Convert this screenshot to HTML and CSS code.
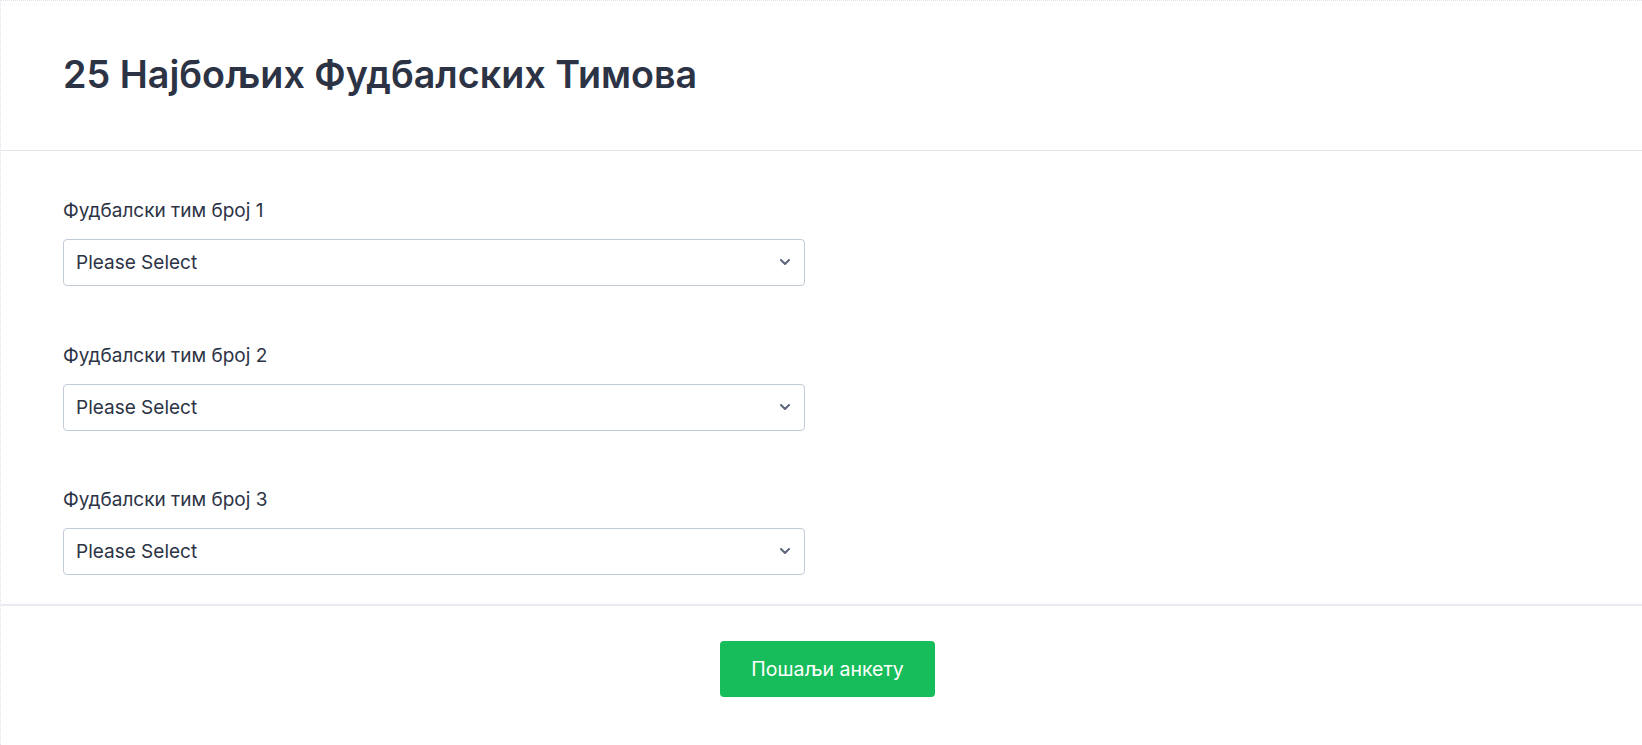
FILE: index.html
```html
<!DOCTYPE html>
<html lang="sr">
<head>
    <meta charset="UTF-8">
    <meta name="viewport" content="width=device-width, initial-scale=1.0">
    <title>25 Најбољих Фудбалских Тимова</title>
    <link rel="stylesheet" href="styles.css">
</head>
<body>
    <form class="form">
        <div class="form-header">
            <h1>25 Најбољих Фудбалских Тимова</h1>
        </div>

        <div class="form-body">
            <div class="form-group">
                <label for="team1">Фудбалски тим број 1</label>
                <div class="select-wrap">
                    <select id="team1">
                        <option>Please Select</option>
                    </select>
                    <svg class="chevron" width="10" height="6" viewBox="0 0 10 6"><path d="M1 1l4 4 4-4" fill="none" stroke="#5f667d" stroke-width="2" stroke-linecap="round" stroke-linejoin="round"/></svg>
                </div>
            </div>

            <div class="form-group">
                <label for="team2">Фудбалски тим број 2</label>
                <div class="select-wrap">
                    <select id="team2">
                        <option>Please Select</option>
                    </select>
                    <svg class="chevron" width="10" height="6" viewBox="0 0 10 6"><path d="M1 1l4 4 4-4" fill="none" stroke="#5f667d" stroke-width="2" stroke-linecap="round" stroke-linejoin="round"/></svg>
                </div>
            </div>

            <div class="form-group">
                <label for="team3">Фудбалски тим број 3</label>
                <div class="select-wrap">
                    <select id="team3">
                        <option>Please Select</option>
                    </select>
                    <svg class="chevron" width="10" height="6" viewBox="0 0 10 6"><path d="M1 1l4 4 4-4" fill="none" stroke="#5f667d" stroke-width="2" stroke-linecap="round" stroke-linejoin="round"/></svg>
                </div>
            </div>
        </div>

        <div class="form-footer">
            <button type="button" class="submit-btn">Пошаљи анкету</button>
        </div>
    </form>
</body>
</html>
```

FILE: styles.css
```css
body {
    margin: 0;
    font-family: 'Inter', 'Noto Sans', sans-serif;
    background-color: #fff;
    color: #2c3345;
}
.form {
    min-height: 100vh;
    box-sizing: border-box;
    border-top: 1px dotted #dfe1ea;
    border-left: 1px dotted #dfe1ea;
}
.form-header {
    padding: 51px 62px 54px;
    border-bottom: 1px solid #e3e5ec;
}
h1 {
    margin: 0;
    font-size: 37.7px;
    line-height: 44px;
    font-weight: 600;
    color: #2c3345;
}
.form-body {
    padding: 48px 62px 29px;
    border-bottom: 2px solid #eaebf2;
}
.form-group {
    margin-bottom: 57.5px;
}
.form-group:last-child {
    margin-bottom: 0;
}
label {
    display: block;
    font-size: 19px;
    line-height: 24px;
    font-weight: 400;
    margin-bottom: 16px;
    color: #2c3345;
}
.select-wrap {
    position: relative;
    width: 742px;
}
select {
    display: block;
    width: 100%;
    height: 47px;
    box-sizing: border-box;
    padding: 0 40px 0 12px;
    border: 1px solid #c3cad8;
    border-radius: 4px;
    background-color: #fff;
    font-family: inherit;
    font-size: 19px;
    color: #2c3345;
    -webkit-appearance: none;
    appearance: none;
}
.chevron {
    position: absolute;
    right: 15px;
    top: 20px;
    pointer-events: none;
}
.form-footer {
    display: flex;
    justify-content: center;
    padding: 35px 0 48px 12px;
}
.submit-btn {
    height: 56px;
    padding: 0 31px;
    border: none;
    border-radius: 4px;
    background-color: #18bd5b;
    color: #fff;
    font-family: inherit;
    font-size: 19.5px;
    font-weight: 400;
    cursor: pointer;
}
```
